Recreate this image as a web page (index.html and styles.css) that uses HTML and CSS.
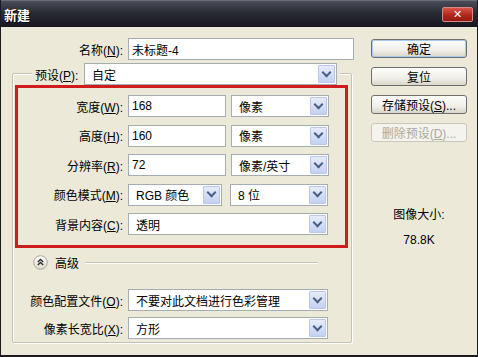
FILE: index.html
```html
<!DOCTYPE html>
<html lang="zh-CN">
<head>
    <meta charset="UTF-8">
    <title>新建</title>
    <link rel="stylesheet" href="styles.css">
</head>
<body>
    <div class="window">
        <div class="titlebar">
            <span class="title">新建</span>
            <button class="close-btn">&#x2715;</button>
        </div>

        <div class="dialog-body">
            <div class="main">
                <div class="row name-row">
                    <label class="lbl">名称(<u>N</u>):</label>
                    <input class="field name-field" type="text" value="未标题-4">
                </div>

                <div class="group">
                    <div class="group-head">
                        <label class="lbl-head">预设(<u>P</u>):</label>
                        <div class="select preset-select"><span>自定</span><i class="arrow"></i></div>
                    </div>

                    <!-- 红框部分 -->
                    <div class="red-box">
                        <div class="row">
                            <label class="lbl">宽度(<u>W</u>):</label>
                            <input class="field num-field" type="text" value="168">
                            <div class="select unit-select"><span>像素</span><i class="arrow"></i></div>
                        </div>
                        <div class="row">
                            <label class="lbl">高度(<u>H</u>):</label>
                            <input class="field num-field" type="text" value="160">
                            <div class="select unit-select"><span>像素</span><i class="arrow"></i></div>
                        </div>
                        <div class="row">
                            <label class="lbl">分辨率(<u>R</u>):</label>
                            <input class="field num-field" type="text" value="72">
                            <div class="select unit-select"><span>像素/英寸</span><i class="arrow"></i></div>
                        </div>
                        <div class="row">
                            <label class="lbl">颜色模式(<u>M</u>):</label>
                            <div class="select mode-select"><span>RGB 颜色</span><i class="arrow"></i></div>
                            <div class="select unit-select"><span>8 位</span><i class="arrow"></i></div>
                        </div>
                        <div class="row">
                            <label class="lbl">背景内容(<u>C</u>):</label>
                            <div class="select wide-select"><span>透明</span><i class="arrow"></i></div>
                        </div>
                    </div>

                    <div class="advanced">
                        <span class="toggle">
                            <svg width="15" height="15" viewBox="0 0 15 15">
                                <defs>
                                    <linearGradient id="tg" x1="0" y1="0" x2="0" y2="1">
                                        <stop offset="0" stop-color="#ffffff"/>
                                        <stop offset="1" stop-color="#dcd9cd"/>
                                    </linearGradient>
                                </defs>
                                <circle cx="7.5" cy="7.5" r="6.8" fill="url(#tg)" stroke="#a9a799"/>
                                <path d="M4.8 7 L7.5 4.5 L10.2 7 M4.8 10 L7.5 7.5 L10.2 10" fill="none" stroke="#2b2b2b" stroke-width="1.3"/>
                            </svg>
                        </span>
                        <span class="adv-text">高级</span>
                        <span class="adv-line"></span>
                    </div>

                    <div class="adv-rows">
                        <div class="row">
                            <label class="lbl lbl-wide">颜色配置文件(<u>O</u>):</label>
                            <div class="select wide-select"><span>不要对此文档进行色彩管理</span><i class="arrow"></i></div>
                        </div>
                        <div class="row">
                            <label class="lbl lbl-wide">像素长宽比(<u>X</u>):</label>
                            <div class="select wide-select"><span>方形</span><i class="arrow"></i></div>
                        </div>
                    </div>
                </div>
            </div>

            <div class="side">
                <button class="btn btn-default">确定</button>
                <button class="btn">复位</button>
                <button class="btn">存储预设(<u>S</u>)...</button>
                <button class="btn" disabled>删除预设(<u>D</u>)...</button>

                <div class="size-info">
                    <div>图像大小:</div>
                    <div class="size-value">78.8K</div>
                </div>
            </div>
        </div>
    </div>
</body>
</html>
```

FILE: styles.css
```css
:root {
    --dlg-bg: #ece9d8;
    --field-border: #a5acb2;
    --text: #000;
    --red: #d01c1c;
}

* {
    box-sizing: border-box;
}

body {
    margin: 0;
    font-family: "Liberation Sans", "Noto Sans CJK SC", sans-serif;
    font-size: 12px;
    color: var(--text);
    background: var(--dlg-bg);
}

.window {
    width: 478px;
    height: 357px;
    background: var(--dlg-bg);
    border-left: 1px solid #1b1c22;
    border-right: 1px solid #1b1c22;
    border-bottom: 2px solid #1b1c22;
    display: flex;
    flex-direction: column;
    overflow: hidden;
}

/* Barra de título */
.titlebar {
    height: 27px;
    flex: none;
    display: flex;
    align-items: center;
    justify-content: space-between;
    padding: 0 4px 0 3px;
    background: linear-gradient(#4a4d58, #2a2c35 45%, #16171d);
    border-top: 1px solid #6b6e79;
}

.title {
    color: #fff;
    font-weight: bold;
    font-size: 13px;
    text-shadow: 1px 1px 0 #000;
}

.close-btn {
    width: 31px;
    height: 15px;
    margin-top: 1px;
    padding: 0;
    border: 1px solid #d88a80;
    border-radius: 2px;
    background: linear-gradient(#d9544a, #b0261c 55%, #951a12);
    color: #fff;
    font-size: 11px;
    font-weight: bold;
    line-height: 13px;
    font-family: "DejaVu Sans", sans-serif;
}

.dialog-body {
    flex: 1;
    display: flex;
    padding: 11px 0 0 11px;
}

.main {
    width: 343px;
}

.row {
    display: flex;
    align-items: center;
    gap: 5px;
}

.lbl {
    width: 105px;
    text-align: right;
    white-space: nowrap;
}

.lbl-wide {
    width: 110px;
}

.name-row .lbl {
    width: 111px;
}

.field {
    height: 22px;
    border: 1px solid var(--field-border);
    background: #fff;
    font: inherit;
    padding: 0 3px;
    color: #000;
    outline: none;
}

.name-field {
    width: 226px;
}

.num-field {
    width: 98px;
}

.select {
    height: 22px;
    border: 1px solid var(--field-border);
    background: #fff;
    display: flex;
    align-items: center;
    justify-content: space-between;
    padding: 0 1px 0 7px;
    white-space: nowrap;
}

.arrow {
    width: 17px;
    height: 18px;
    border: 1px solid #b9c8ea;
    border-radius: 1px;
    background: linear-gradient(#e6ecfa, #c3d1f2);
    display: flex;
    align-items: center;
    justify-content: center;
}

.arrow::before {
    content: "";
    width: 5px;
    height: 5px;
    border-right: 2px solid #4b5f86;
    border-bottom: 2px solid #4b5f86;
    transform: translateY(-2px) rotate(45deg);
}

.unit-select {
    width: 98px;
}

.mode-select {
    width: 94px;
    margin-right: 3px;
}

.wide-select {
    width: 200px;
}

.preset-select {
    width: 253px;
}

/* Grupo de preajustes */
.group {
    width: 340px;
    margin-top: 13px;
    border: 1px solid #c5c2b2;
    border-radius: 2px;
    box-shadow: 1px 1px 0 #fff, inset 1px 1px 0 #fff;
    padding: 0 0 3px 0;
}

.group-head {
    display: flex;
    align-items: center;
    width: fit-content;
    margin: -11px 0 0 19px;
    padding: 0 3px;
    background: var(--dlg-bg);
}

.lbl-head {
    width: 49px;
    white-space: nowrap;
}

.red-box {
    margin: 0 3px 0 2px;
    border: 3px solid var(--red);
    padding: 7px 0 10px 0;
    display: flex;
    flex-direction: column;
    gap: 7.5px;
}

.advanced {
    display: flex;
    align-items: center;
    height: 15px;
    margin: 7px 33px 0 20px;
}

.toggle {
    display: flex;
    width: 15px;
    height: 15px;
}

.adv-text {
    margin: 0 6px 0 7px;
}

.adv-line {
    flex: 1;
    height: 2px;
    border-top: 1px solid #c5c2b2;
    border-bottom: 1px solid #fff;
}

.adv-rows {
    margin-top: 19px;
    display: flex;
    flex-direction: column;
    gap: 6px;
}

/* Columna derecha */
.side {
    width: 96px;
    margin-left: 16px;
    padding-top: 1px;
    display: flex;
    flex-direction: column;
    gap: 9px;
}

.btn {
    height: 19px;
    border: 1px solid #6f6f6f;
    border-radius: 3px;
    background: linear-gradient(#fdfdfb, #f0efe9 60%, #d9d5c9);
    font: inherit;
    color: #000;
    padding: 0;
}

.btn-default {
    box-shadow: inset 0 0 0 1px #a9c9ee;
}

.btn:disabled {
    color: #aca899;
    border-color: #c9c7ba;
    background: #f4f3ee;
}

.size-info {
    margin-top: 56px;
    text-align: center;
    line-height: 16px;
    display: flex;
    flex-direction: column;
    gap: 9px;
}
```
